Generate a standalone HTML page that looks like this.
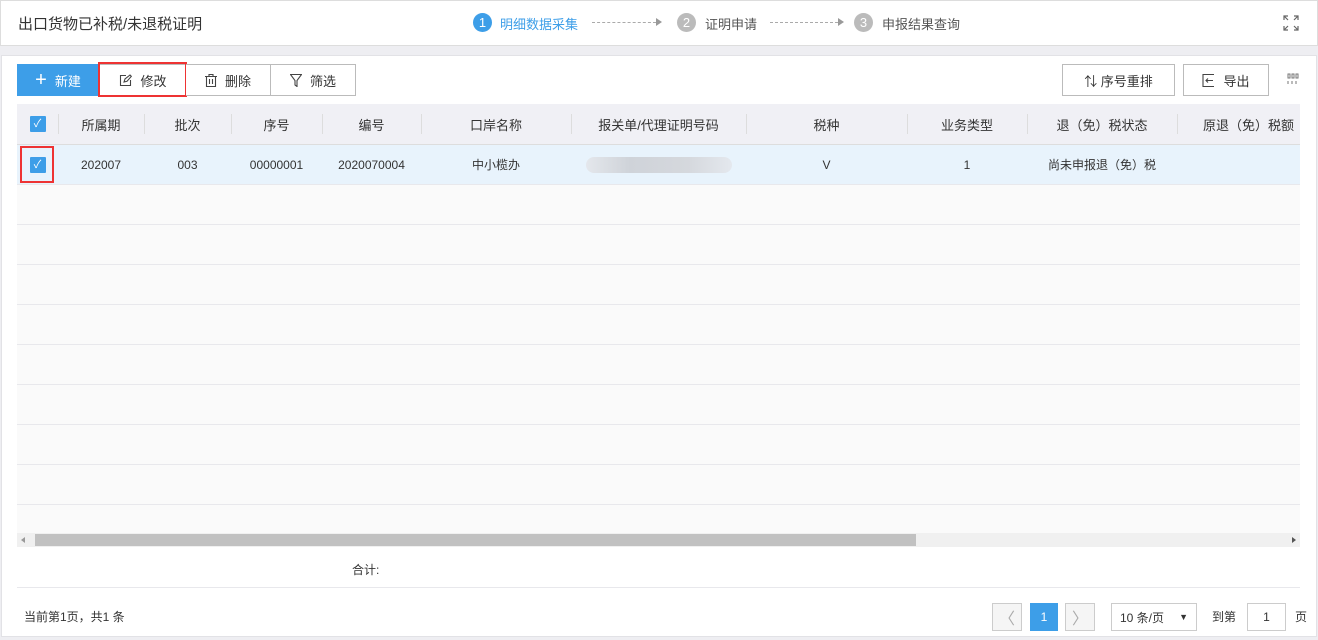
<!DOCTYPE html>
<html><head><meta charset="utf-8"><style>
*{box-sizing:border-box;margin:0;padding:0}
body{width:1318px;height:640px;background:#eeeef2;font-family:"Liberation Sans","Noto Sans CJK SC",sans-serif;font-size:12px;color:#333;position:relative;overflow:hidden}
.a{position:absolute}
.hdr{left:0;top:0;width:1318px;height:46px;background:#fff;border:1px solid #ddd}
.main{left:1px;top:55px;width:1316px;height:582px;background:#fff;border:1px solid #e2e2e6}
.btn{position:absolute;top:64px;height:32px;border:1px solid #bbb;background:#fff;font-size:13px;display:flex;align-items:center;justify-content:center;gap:8px;color:#333}
.circ{position:absolute;top:13px;width:19px;height:19px;border-radius:50%;color:#fff;font-size:13px;text-align:center;line-height:19px}
.dash{position:absolute;top:22px;border-top:1px dashed #aaa}
.arr{position:absolute;top:18px;width:0;height:0;border-left:6px solid #999;border-top:4px solid transparent;border-bottom:4px solid transparent}
.row{position:absolute;left:17px;width:1283px;height:40px;border-bottom:1px solid #e8e8ec}
.c{position:absolute;top:0;height:100%;display:flex;align-items:center;justify-content:center}
.cb{width:16px;height:16px;background:#3d9ee8;border-radius:1px}
.pb{position:absolute;top:603px;height:28px;border:1px solid #ccc;background:#f5f5f5;display:flex;align-items:center;justify-content:center}
</style></head><body>
<div class="a hdr"></div>
<div class="a" style="left:18px;top:13px;font-size:15px;color:#333">出口货物已补税/未退税证明</div>
<div class="circ" style="left:473px;background:#3d9ee8">1</div>
<div class="a" style="left:500px;top:14px;font-size:13px;color:#3d9ee8">明细数据采集</div>
<div class="dash" style="left:592px;width:64px"></div><div class="arr" style="left:656px"></div>
<div class="circ" style="left:677px;background:#bbb">2</div>
<div class="a" style="left:705px;top:14px;font-size:13px;color:#555">证明申请</div>
<div class="dash" style="left:770px;width:68px"></div><div class="arr" style="left:838px"></div>
<div class="circ" style="left:854px;background:#bbb">3</div>
<div class="a" style="left:882px;top:14px;font-size:13px;color:#555">申报结果查询</div>
<svg class="a" style="left:1283px;top:15px" width="16" height="16" viewBox="0 0 16 16" fill="none" stroke="#666" stroke-width="1.2"><path d="M1 5V1h4M1 1l4 4M11 1h4v4M15 1l-4 4M1 11v4h4M1 15l4-4M15 11v4h-4M15 15l-4-4"/></svg>

<div class="a main"></div>
<div class="btn" style="left:17px;width:82px;background:#3d9ee8;border-color:#3d9ee8;color:#fff"><span style="font-size:20px;font-weight:300;line-height:1">+</span>新建</div>
<div class="btn" style="left:99px;width:88px"><svg width="13" height="13" viewBox="0 0 13 13" fill="none" stroke="#444" stroke-width="1.1"><path d="M7 1.5H1.5v10h10V6M5 8l1-3 5-4 1.3 1.3-4.3 5z"/></svg>修改</div>
<div class="a" style="left:98px;top:62px;width:89px;height:35px;border:2px solid #e33"></div>
<div class="btn" style="left:186px;width:85px;border-left:none"><svg width="12" height="13" viewBox="0 0 12 13" fill="none" stroke="#444" stroke-width="1.1"><path d="M0 2.5h12M4 2.5V.5h4v2M1.5 2.5v10h9v-10M4.5 5v5M7.5 5v5"/></svg>删除</div>
<div class="btn" style="left:270px;width:86px"><svg width="12" height="13" viewBox="0 0 12 13" fill="none" stroke="#444" stroke-width="1.1"><path d="M.5 .5h11L7 6.5v6L5 11V6.5z"/></svg>筛选</div>
<div class="btn" style="left:1062px;width:113px">⇅ 序号重排</div>
<div class="btn" style="left:1183px;width:86px"><svg width="13" height="13" viewBox="0 0 13 13" fill="none" stroke="#444" stroke-width="1.1"><path d="M12 .5H1v12h11M4 6.5h7M6 4.5l-2 2 2 2"/></svg>导出</div>
<svg class="a" style="left:1287px;top:73px" width="12" height="12" viewBox="0 0 12 12" fill="none" stroke="#777"><path d="M1 1h2v4H1zM5 1h2v4H5zM9 1h2v4H9zM1 8v3M5 8v3M9 8v3"/></svg>

<div class="row" style="top:104px;background:#f0f0f5;height:41px;border-bottom:1px solid #ddd;font-size:13px">
<div class="c" style="left:0;width:41px"><div class="cb" style="color:#fff;font-size:11px;text-align:center;line-height:16px">✓</div></div>
<div class="c" style="left:41px;width:86px">所属期</div><div class="c" style="left:127px;width:87px">批次</div><div class="c" style="left:214px;width:91px">序号</div><div class="c" style="left:305px;width:99px">编号</div><div class="c" style="left:404px;width:150px">口岸名称</div><div class="c" style="left:554px;width:175px">报关单/代理证明号码</div><div class="c" style="left:729px;width:161px">税种</div><div class="c" style="left:890px;width:120px">业务类型</div><div class="c" style="left:1010px;width:150px">退（免）税状态</div><div class="c" style="left:1160px;width:150px;justify-content:flex-start;padding-left:26px;white-space:nowrap">原退（免）税额</div>
<div class="a" style="left:41px;top:10px;height:20px;border-left:1px solid #ddd"></div><div class="a" style="left:127px;top:10px;height:20px;border-left:1px solid #ddd"></div><div class="a" style="left:214px;top:10px;height:20px;border-left:1px solid #ddd"></div><div class="a" style="left:305px;top:10px;height:20px;border-left:1px solid #ddd"></div><div class="a" style="left:404px;top:10px;height:20px;border-left:1px solid #ddd"></div><div class="a" style="left:554px;top:10px;height:20px;border-left:1px solid #ddd"></div><div class="a" style="left:729px;top:10px;height:20px;border-left:1px solid #ddd"></div><div class="a" style="left:890px;top:10px;height:20px;border-left:1px solid #ddd"></div><div class="a" style="left:1010px;top:10px;height:20px;border-left:1px solid #ddd"></div><div class="a" style="left:1160px;top:10px;height:20px;border-left:1px solid #ddd"></div>
</div>
<div class="row" style="top:145px;background:#e8f3fc">
<div class="c" style="left:0;width:41px"><div class="cb" style="color:#fff;font-size:11px;text-align:center;line-height:16px">✓</div></div>
<div class="c" style="left:41px;width:86px">202007</div><div class="c" style="left:127px;width:87px">003</div><div class="c" style="left:214px;width:91px">00000001</div><div class="c" style="left:305px;width:99px">2020070004</div><div class="c" style="left:404px;width:150px">中小榄办</div><div class="c" style="left:554px;width:175px"><div style="width:146px;height:16px;border-radius:8px;background:linear-gradient(90deg,#e4e7ec,#cfd3d9 30%,#d5d8dd 70%,#e4e8ee)"></div></div><div class="c" style="left:729px;width:161px">V</div><div class="c" style="left:890px;width:120px">1</div><div class="c" style="left:1010px;width:150px">尚未申报退（免）税</div>
</div>
<div class="a" style="left:20px;top:146px;width:34px;height:37px;border:2px solid #e33"></div>
<div class="row" style="top:185px;background:#fafafa"></div>
<div class="row" style="top:225px;background:#fafafa"></div>
<div class="row" style="top:265px;background:#fafafa"></div>
<div class="row" style="top:305px;background:#fafafa"></div>
<div class="row" style="top:345px;background:#fafafa"></div>
<div class="row" style="top:385px;background:#fafafa"></div>
<div class="row" style="top:425px;background:#fafafa"></div>
<div class="row" style="top:465px;background:#fafafa"></div>
<div class="row" style="top:505px;height:28px;background:#fafafa;border:none"></div>
<div class="a" style="left:17px;top:533px;width:1283px;height:14px;background:#f0f0f0"></div>
<div class="a" style="left:35px;top:534px;width:881px;height:12px;background:#c1c1c1"></div>
<div class="a" style="left:21px;top:537px;border-right:4px solid #999;border-top:3px solid transparent;border-bottom:3px solid transparent"></div>
<div class="a" style="left:1292px;top:537px;border-left:4px solid #555;border-top:3px solid transparent;border-bottom:3px solid transparent"></div>
<div class="a" style="left:352px;top:561px">合计:</div>
<div class="a" style="left:17px;top:587px;width:1283px;border-top:1px solid #e8e8ec"></div>
<div class="a" style="left:24px;top:608px">当前第1页，共1 条</div>
<div class="pb" style="left:992px;width:30px;color:#aaa;font-size:16px">〈</div>
<div class="pb" style="left:1030px;width:28px;background:#3d9ee8;border-color:#3d9ee8;color:#fff">1</div>
<div class="pb" style="left:1065px;width:30px;color:#aaa;font-size:16px">〉</div>
<div class="pb" style="left:1111px;width:86px;background:#fff;justify-content:space-between;padding:0 8px">10 条/页<span style="font-size:9px">▼</span></div>
<div class="a" style="left:1212px;top:608px">到第</div>
<div class="pb" style="left:1247px;width:39px;background:#fff">1</div>
<div class="a" style="left:1295px;top:608px">页</div>
</body></html>
